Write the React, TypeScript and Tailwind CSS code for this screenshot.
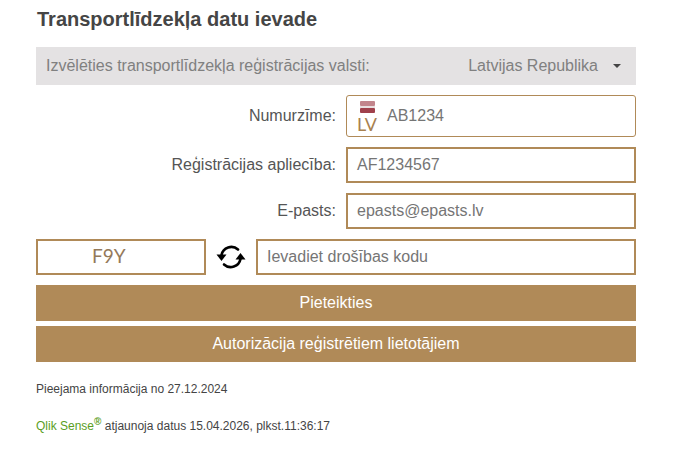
const borderInput =
  "h-[36px] border-2 border-[#b08a58] bg-white pl-[9px] text-[16px] text-[#757575] flex items-center";

const Row = ({ label, children }: { label: string; children: React.ReactNode }) => (
  <div className="flex items-center mb-[10px]">
    <label className="w-[300px] text-right text-[16px] text-[#555555]">{label}</label>
    <div className="w-[290px] ml-[10px]">{children}</div>
  </div>
);

export default function App() {
  return (
    <div className="min-h-screen bg-white font-['Liberation_Sans',Arial,sans-serif]">
      <div className="w-[600px] ml-[36px] pt-[8px]">
        <h1 className="text-[20px] leading-[23px] font-bold text-[#454545] ml-[1px] mb-[16px]">
          Transportlīdzekļa datu ievade
        </h1>

        <div className="h-[38px] bg-[#e4e2e3] flex items-center pl-[10px] pr-[15px] text-[16px] text-[#808080] mb-[10px]">
          <span className="flex-1">Izvēlēties transportlīdzekļa reģistrācijas valsti:</span>
          <span>Latvijas Republika</span>
          <span className="ml-[15px] w-0 h-0 border-x-[4px] border-x-transparent border-t-[4px] border-t-[#444444]" />
        </div>

        <Row label="Numurzīme:">
          <div className="h-[42px] border border-[#b08a58] rounded-[3px] bg-white flex items-center pl-[12px] text-[16px] text-[#757575]">
            <div className="w-[16px] flex flex-col items-center mr-[12px]">
              <svg width="15" height="12" viewBox="0 0 15 12" className="block">
                <rect width="15" height="5" rx="1" fill="#c2858c" />
                <rect y="5" width="15" height="2" fill="#e9dfe0" />
                <rect y="7" width="15" height="5" rx="1" fill="#a0414c" />
              </svg>
              <span className="text-[18px] leading-[16px] font-['Lato',sans-serif] text-[#a8814f] mt-[3px]">LV</span>
            </div>
            <span>AB1234</span>
          </div>
        </Row>

        <Row label="Reģistrācijas apliecība:">
          <div className={borderInput}>AF1234567</div>
        </Row>

        <Row label="E-pasts:">
          <div className={borderInput}>epasts@epasts.lv</div>
        </Row>

        <div className="flex items-center mb-[10px]">
          <div className="w-[170px] h-[36px] border-2 border-[#b08a58] flex items-center pl-[54px] pb-[2px] font-['Lato',sans-serif] text-[19px] text-[#94795a]">
            F9Y
          </div>
          <div className="w-[50px] flex justify-center">
            <svg width="30" height="28" viewBox="0 0 30 28" fill="none">
              <path d="M5.5 12 A10 10 0 0 1 22 6.5" stroke="#000" strokeWidth="2.6" strokeLinecap="round" />
              <path d="M24.5 16 A10 10 0 0 1 8 21.5" stroke="#000" strokeWidth="2.6" strokeLinecap="round" />
              <path d="M0.5 11.5 L10.5 11.5 L5.5 18 Z" fill="#000" />
              <path d="M19.5 16.5 L29.5 16.5 L24.5 10 Z" fill="#000" />
            </svg>
          </div>
          <div className={`${borderInput} w-[380px]`}>Ievadiet drošības kodu</div>
        </div>

        <button className="block w-full h-[36px] bg-[#b08a58] text-white text-[16px] mb-[5px]">
          Pieteikties
        </button>
        <button className="block w-full h-[36px] bg-[#b08a58] text-white text-[16px]">
          Autorizācija reģistrētiem lietotājiem
        </button>

        <p className="mt-[20px] text-[12px] leading-[14px] text-[#444444]">Pieejama informācija no 27.12.2024</p>
        <p className="mt-[23px] text-[12px] leading-[14px] text-[#444444]">
          <span className="text-[#5a9e1e]">Qlik Sense</span>
          <sup className="text-[#5a9e1e] font-bold text-[10px] leading-none">®</sup> atjaunoja datus 15.04.2026, plkst.11:36:17
        </p>
      </div>
    </div>
  );
}
